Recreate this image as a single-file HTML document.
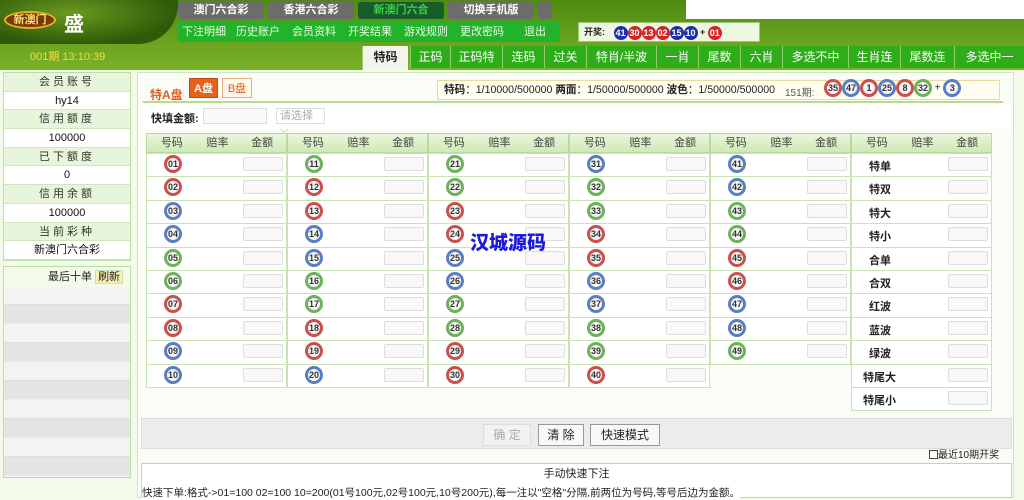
<!DOCTYPE html>
<html><head><meta charset="utf-8"><style>
*{margin:0;padding:0;box-sizing:border-box}
body{width:1024px;height:498px;overflow:hidden;background:#f3faea;font-family:"Liberation Sans","Noto Sans CJK SC",sans-serif;font-size:11px;color:#222;position:relative}
.a{position:absolute}
.hdr{left:0;top:0;width:1024px;height:70px;background:linear-gradient(#4e8a12,#6aa31e 60%,#7bb02a)}
.logo{left:0;top:0;width:178px;height:44px;background:radial-gradient(ellipse at 40% 30%,#6a9a20,#2f5a08 70%);border-bottom-right-radius:40px}
.tab1{top:2px;height:17px;background:#6c6c6c;color:#fff;font-weight:bold;font-size:11px;text-align:center;line-height:17px;border-radius:3px}
.m2{top:22px;height:20px;background:#23b32d;color:#e8ffe0;font-size:11px;line-height:20px;text-align:center}
.t3{top:46px;height:22px;background:#2eac19;color:#fff;font-size:12px;line-height:22px;text-align:center;border-left:1px solid #8fd06a}
.ball{display:inline-block;width:17px;height:17px;border-radius:50%;color:#fff;font-size:9px;font-weight:bold;text-align:center;line-height:17px;vertical-align:middle}
.bb{display:inline-block;width:18px;height:18px;border-radius:50%;border:3px solid;background:#f6f6f6;font-size:9px;font-weight:bold;text-align:center;line-height:12px;color:#333;vertical-align:middle}
.R{border-color:#c9514d}.B{border-color:#5a7fc0}.G{border-color:#6bb25a}
.side div{height:18.7px;line-height:18.7px;text-align:center;border-bottom:1px solid #cfe6c0}
.sl{background:#e7f5da;color:#333;letter-spacing:3px}
.sv{background:#fff;color:#111}
.inp{position:absolute;width:40px;height:14px;border:1px solid #ddd;border-radius:2px;background:#f8f8f8}
</style></head><body>
<div class="a hdr"></div>
<div class="a" style="left:686px;top:0;width:338px;height:19px;background:#fff"></div>
<div class="a logo"></div>
<div class="a" style="left:4px;top:11px;width:52px;height:18px;border-radius:50%;border:2px solid #e0b020;background:#7a3a08;color:#ffe07a;font-weight:bold;font-size:11px;text-align:center;line-height:14px">新澳门</div>
<div class="a" style="left:64px;top:8px;color:#fff;font-size:20px;font-weight:bold">盛</div>
<div class="a tab1" style="left:178px;width:86px">澳门六合彩</div>
<div class="a tab1" style="left:268px;width:86px">香港六合彩</div>
<div class="a tab1" style="left:358px;width:86px;background:#185c2c;color:#3ad04a">新澳门六合</div>
<div class="a tab1" style="left:448px;width:86px">切换手机版</div>
<div class="a tab1" style="left:538px;width:14px"></div>
<div class="a m2" style="left:178px;width:382px;background:#22b22c"></div>
<div class="a" style="left:178px;top:22px;width:382px;font-size:11px;color:#e8ffe0;line-height:20px;display:flex">
<span style="width:52px;text-align:center">下注明细</span><span style="width:56px;text-align:center">历史账户</span><span style="width:56px;text-align:center">会员资料</span><span style="width:56px;text-align:center">开奖结果</span><span style="width:56px;text-align:center">游戏规则</span><span style="width:56px;text-align:center">更改密码</span><span style="width:50px;text-align:center">退出</span></div>
<div class="a" style="left:578px;top:22px;width:182px;height:20px;background:#eef7e0;border:1px solid #9bc77a;font-size:9px;font-weight:bold;line-height:18px;padding-left:5px">开奖:
<span class="ball" style="background:#1a2fa8;width:14px;height:14px;line-height:14px;margin-left:6px">41</span><span class="ball" style="background:#d42424;width:14px;height:14px;line-height:14px">30</span><span class="ball" style="background:#d42424;width:14px;height:14px;line-height:14px">13</span><span class="ball" style="background:#d42424;width:14px;height:14px;line-height:14px">02</span><span class="ball" style="background:#1a2fa8;width:14px;height:14px;line-height:14px">15</span><span class="ball" style="background:#1a2fa8;width:14px;height:14px;line-height:14px">10</span> + <span class="ball" style="background:#d42424;width:14px;height:14px;line-height:14px">01</span></div>
<div class="a" style="left:30px;top:48px;color:#f0e040;font-size:11px">001期 13:10:39</div>
<div class="a t3" style="left:362px;width:46px;background:#f4f4ec;color:#222;font-weight:bold;height:24px">特码</div>
<div class="a t3" style="left:410px;width:40px">正码</div>
<div class="a t3" style="left:450px;width:52px">正码特</div>
<div class="a t3" style="left:502px;width:42px">连码</div>
<div class="a t3" style="left:544px;width:42px">过关</div>
<div class="a t3" style="left:586px;width:70px">特肖/半波</div>
<div class="a t3" style="left:656px;width:42px">一肖</div>
<div class="a t3" style="left:698px;width:42px">尾数</div>
<div class="a t3" style="left:740px;width:42px">六肖</div>
<div class="a t3" style="left:782px;width:66px">多选不中</div>
<div class="a t3" style="left:848px;width:52px">生肖连</div>
<div class="a t3" style="left:900px;width:54px">尾数连</div>
<div class="a t3" style="left:954px;width:70px">多选中一</div>

<div class="a side" style="left:3px;top:72px;width:128px;border:1px solid #bcdca8;font-size:11px">
<div class="sl">会员账号</div><div class="sv">hy14</div><div class="sl">信用额度</div><div class="sv">100000</div><div class="sl">已下额度</div><div class="sv">0</div><div class="sl">信用余额</div><div class="sv">100000</div><div class="sl">当前彩种</div><div class="sv">新澳门六合彩</div></div>
<div class="a" style="left:3px;top:266px;width:128px;height:212px;border:1px solid #bcdca8;background:repeating-linear-gradient(#e4e4e4 0 18px,#ececec 18px 19px,#f3f3f3 19px 37px,#ddd 37px 38px)">
<div style="height:20px;background:#f3faea;line-height:20px;padding-left:44px">最后十单 <span style="background:#f5f0b0;border:1px solid #cdb;padding:0 2px">刷新</span></div></div>

<div class="a" style="left:137px;top:72px;width:877px;height:426px;border:1px solid #cde6bc;background:#fafdf6"></div>
<div class="a" style="left:150px;top:86px;color:#e0601a;font-weight:bold;font-size:12px">特A盘</div>
<div class="a" style="left:189px;top:78px;width:29px;height:20px;background:#e8621a;color:#fff;font-weight:bold;text-align:center;line-height:20px;border:1px solid #c04a10">A盘</div>
<div class="a" style="left:222px;top:78px;width:30px;height:20px;background:#fff6ec;color:#e0601a;text-align:center;line-height:20px;border:1px solid #e0b080">B盘</div>
<div class="a" style="left:143px;top:101px;width:860px;height:2px;background:#b9dc8c"></div>
<div class="a" style="left:437px;top:80px;width:563px;height:20px;background:#fffdf0;border:1px solid #e4dca0;line-height:18px;padding-left:6px;font-size:10.6px;white-space:nowrap;overflow:hidden"><b>特码</b>：1/10000/500000 <b>两面</b>：1/50000/500000 <b>波色</b>：1/50000/500000</div>
<div class="a" style="left:785px;top:84px;font-size:10px;color:#555">151期:</div>
<div class="a" style="left:824px;top:79px;font-size:10px">
<span class="bb R">35</span><span class="bb B">47</span><span class="bb R">1</span><span class="bb B">25</span><span class="bb R">8</span><span class="bb G">32</span> + <span class="bb B">3</span></div>
<div class="a" style="left:143px;top:104px;width:868px;height:25px;background:#fff"></div>
<div class="a" style="left:151px;top:110px;font-weight:bold">快填金额:</div>
<div class="a" style="left:203px;top:108px;width:64px;height:16px;border:1px solid #ddd;background:#fafafa"></div>
<div class="a" style="left:276px;top:108px;width:49px;height:16px;border:1px solid #ddd;color:#aaa;line-height:14px;padding-left:3px">请选择 ⌵</div>
<div id="tb"></div>
<div class="a" style="left:470px;top:228px;color:#1a1ae0;font-size:19px;font-weight:900;letter-spacing:0">汉城源码</div>
<div class="a" style="left:141px;top:418px;width:871px;height:31px;background:#ececec;border:1px solid #ddd"></div>
<div class="a" style="left:483px;top:424px;width:48px;height:22px;border:1px solid #ddd;background:#f2f2f2;color:#aaa;text-align:center;line-height:20px;font-size:12px">确 定</div>
<div class="a" style="left:538px;top:424px;width:46px;height:22px;border:1px solid #999;background:#f8f8f8;text-align:center;line-height:20px;font-size:12px">清 除</div>
<div class="a" style="left:590px;top:424px;width:70px;height:22px;border:1px solid #999;background:#f8f8f8;text-align:center;line-height:20px;font-size:12px">快速模式</div>
<div class="a" style="left:929px;top:450px;font-size:10px;line-height:12px"><span style="display:inline-block;width:9px;height:9px;border:1px solid #444;vertical-align:-1px"></span>最近10期开奖</div>
<div class="a" style="left:141px;top:463px;width:871px;height:35px;border:1px solid #ccc;background:#fff;text-align:center;line-height:20px;font-size:11px">手动快速下注</div>
<div class="a" style="left:142px;top:485px;font-size:10.5px;background:#fff">快速下单:格式->01=100 02=100 10=200(01号100元,02号100元,10号200元),每一注以"空格"分隔,前两位为号码,等号后边为金额。</div>
<script>
var col={R:[1,2,7,8,12,13,18,19,23,24,29,30,34,35,40,45,46],B:[3,4,9,10,14,15,20,25,26,31,36,37,41,42,47,48]};
function c(n){return col.R.indexOf(n)>=0?'R':col.B.indexOf(n)>=0?'B':'G'}
var h='',RH=23.4,T=153;
var xs=[146,287,428,569,710,851];
for(var k=0;k<6;k++){var x=xs[k],rows=k<5?10:11,last=k==5;
if(k==4)rows=9;
h+='<div class="a" style="left:'+x+'px;top:133px;width:141px;height:20px;background:linear-gradient(#eaf6dc,#cfe9b6);border:1px solid #b8da9c;display:flex;color:#444;line-height:18px"><span style="width:50px;text-align:center">号码</span><span style="width:42px;text-align:center">赔率</span><span style="width:48px;text-align:center">金额</span></div>';
var L=['特单','特双','特大','特小','合单','合双','红波','蓝波','绿波','特尾大','特尾小'];
for(var r=0;r<rows;r++){var y=T+r*RH;
h+='<div class="a" style="left:'+x+'px;top:'+y+'px;width:141px;height:'+(RH+1)+'px;background:#fff;border:1px solid #c9e3b6"></div>';
if(last){h+='<div class="a" style="left:'+(x+(L[r].length>2?12:18))+'px;top:'+(y+5)+'px;font-weight:bold">'+L[r]+'</div>';}
else{var n=k*10+r+1,s=(n<10?'0':'')+n;h+='<div class="a" style="left:'+(x+18)+'px;top:'+(y+2)+'px"><span class="bb '+c(n)+'">'+s+'</span></div>';}
h+='<div class="inp" style="left:'+(x+97)+'px;top:'+(y+4)+'px"></div>';}}
h+='<div class="a" style="left:146px;top:387px;width:565px;height:1px;background:#c9e3b6"></div>';
document.getElementById('tb').innerHTML=h;
</script>
</body></html>
